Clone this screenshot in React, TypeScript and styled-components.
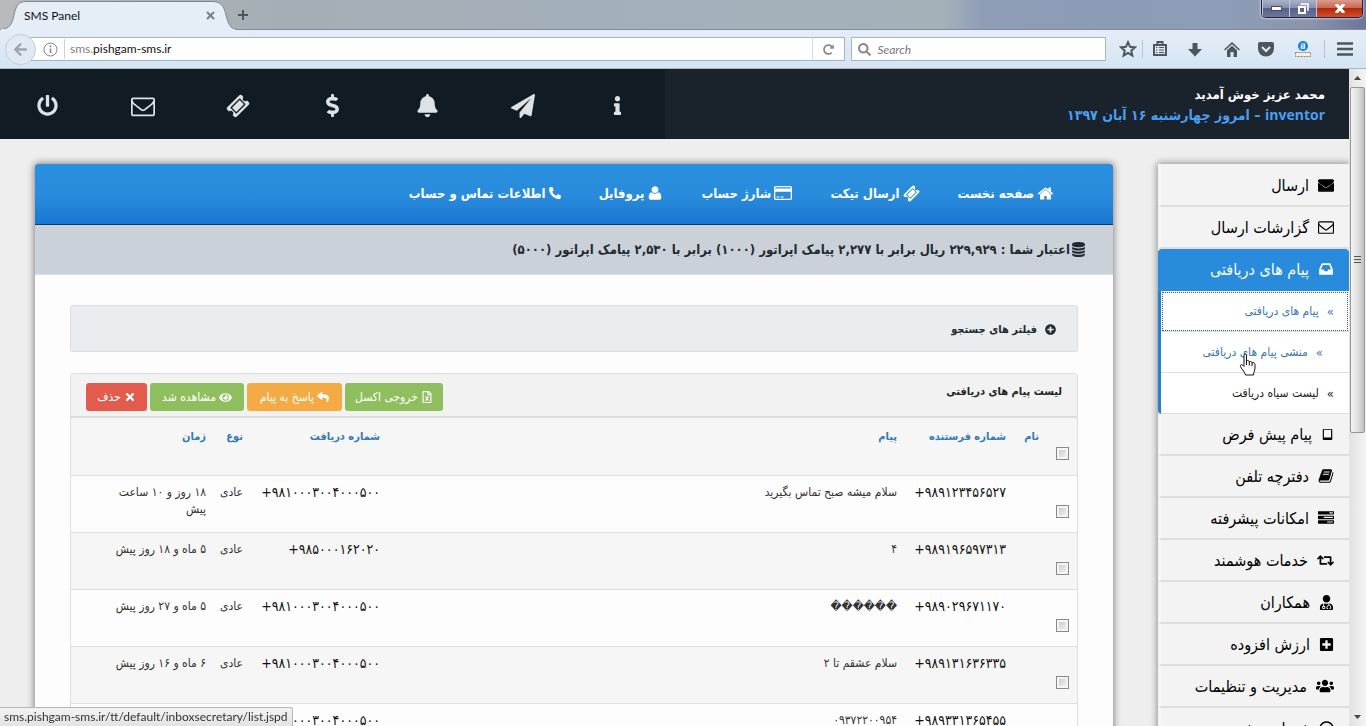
import React from 'react';
import styled, { createGlobalStyle, css } from 'styled-components';
import {
  FaArrowLeft, FaBell, FaRegCheckCircle, FaDollarSign, FaEye, FaInfo,
  FaPhoneAlt, FaPlusCircle, FaPlusSquare, FaPowerOff, FaRedoAlt, FaRegFileExcel,
  FaReply, FaRetweet, FaSearch, FaTimes, FaUserMd, FaUsers,
} from 'react-icons/fa';

const farsi = "'DejaVu Sans Condensed', 'DejaVu Sans', sans-serif";
const ui = "Lato, 'Open Sans', sans-serif";

const GlobalStyle = createGlobalStyle`
  * { box-sizing: border-box; }
  body { margin: 0; overflow: hidden; background: #eee; font-family: ${farsi}; }
  button, input { font-family: inherit; }
  a { text-decoration: none; color: inherit; }
`;

const paths = {
  envelope: 'M1664 1504v-768q-32 36-69 66-268 206-426 338-51 43-83 67t-86.5 48.5-102.5 24.5h-2q-48 0-102.5-24.5t-86.5-48.5-83-67q-158-132-426-338-37-30-69-66v768q0 13 9.5 22.5t22.5 9.5h1472q13 0 22.5-9.5t9.5-22.5zm0-1051v-24.5l-.5-13-3-12.5-5.5-9-9-7.5-14-2.5h-1472q-13 0-22.5 9.5t-9.5 22.5q0 168 147 284 193 152 401 317 6 5 35 29.5t46 37.5 44.5 31.5 50.5 27.5 43 9h2q20 0 43-9t50.5-27.5 44.5-31.5 46-37.5 35-29.5q208-165 401-317 54-43 100.5-115.5t46.5-131.5zm128-37v1088q0 66-47 113t-113 47h-1472q-66 0-113-47t-47-113v-1088q0-66 47-113t113-47h1472q66 0 113 47t47 113z',
  envelopeFull: 'M1792 620v900q0 60-47 100t-113 44h-1472q-66 0-113-44t-47-100v-900q44 49 101 87 362 246 497 345 57 42 92.500 65.500t94.500 48 110 24.500h2q51 0 110-24.500t94.500-48 92.500-65.500q170-123 498-345 57-39 100-87zm0-200q0 79-49 151t-122 123q-376 261-468 325-10 7-42.500 30.500t-54 38-52 32.500-57.500 27-50 9h-2q-23 0-50-9t-57.500-27-52-32.500-54-38-42.500-30.500q-91-64-262-182.500t-205-142.500q-62-42-117-115.500t-55-136.500q0-78 41.500-130t118.500-52h1472q65 0 112.500 40t47.500 110z',
  ticket: 'M1024 452l316 316-572 572-316-316zm-211 979l618-618q19-19 19-45t-19-45l-362-362q-18-18-45-18t-45 18l-618 618q-19 19-19 45t19 45l362 362q18 18 45 18t45-18zm889-637l-907 908q-37 37-90.5 37t-90.5-37l-126-126q56-56 56-136t-56-136-136-56-136 56l-125-126q-37-37-37-90.5t37-90.5l907-906q37-37 90.5-37t90.5 37l125 125q-56 56-56 136t56 136 136 56 136-56l126 125q37 37 37 90.5t-37 90.5z',
  plane: 'M1764 11q33 24 27 64l-256 1536q-5 29-32 45-14 8-31 8-11 0-24-5l-453-185-242 295q-18 23-49 23-13 0-22-4-19-7-30.5-23.5t-11.5-36.5v-349l864-1059-1069 925-395-162q-37-14-40-55-2-40 32-59l1664-960q15-9 32-9 20 0 36 11z',
  inbox: 'M1151 960h316q-1-3-2.5-8.5t-2.5-7.5l-212-496h-708l-212 496q-1 3-2.5 8t-2.5 8h316l95 192h320zm513 30v482q0 26-19 45t-45 19h-1408q-26 0-45-19t-19-45v-482q0-62 25-123l238-552q10-25 36.5-42t52.5-17h832q26 0 52.5 17t36.5 42l238 552q25 61 25 123z',
  user: 'M1600 1405q0 120-73 189.5t-194 69.5h-874q-121 0-194-69.5t-73-189.5q0-53 3.5-103.5t14-109 26.5-108.5 43-97.5 62-81 85.5-53.5 111.5-20q9 0 42 21.5t74.5 48 108 48 133.5 21.5 133.5-21.5 108-48 74.5-48 42-21.5q61 0 111.5 20t85.5 53.5 62 81 43 97.5 26.5 108.5 14 109 3.5 103.5zm-320-893q0 159-112.5 271.5t-271.5 112.5-271.5-112.5-112.5-271.5 112.5-271.5 271.5-112.5 271.5 112.5 112.5 271.5z',
  home: 'M1472 992v480q0 26-19 45t-45 19h-384v-384h-256v384h-384q-26 0-45-19t-19-45v-480q0-1 .5-3t.5-3l575-474 575 474q1 2 1 6zm223-69l-62 74q-8 9-21 11h-3q-13 0-21-7l-692-577-692 577q-12 8-24 7-13-2-21-11l-62-74q-8-10-7-23.5t11-21.5l719-599q32-26 76-26t76 26l244 204v-195q0-14 9-23t23-9h192q14 0 23 9t9 23v408l219 182q10 8 11 21.5t-7 23.5z',
  card: 'M160 192h1472q66 0 113 47t47 113v1088q0 66-47 113t-113 47h-1472q-66 0-113-47t-47-113v-1088q0-66 47-113t113-47zm-32 576v656q0 32 32 32h1472q32 0 32-32v-656zm0-416v96h1536v-96q0-32-32-32h-1472q-32 0-32 32zm128 896h256v96h-256zm384 0h320v96h-320z',
  book: 'M1703 478q40 57 18 129l-275 906q-19 64-76.5 107.5t-122.5 43.5h-923q-77 0-148.5-53.5t-99.5-131.5q-24-67-2-127 0-4 3-27t4-37q1-8-3-21.5t-3-19.5q2-11 8-21t16.5-23.5 16.5-23.5q23-38 45-91.5t30-91.5q3-10 .5-30t-.5-28q3-11 17-28t17-23q21-36 42-92t25-90q1-9-2.5-32t.5-28q4-13 22-30.5t22-22.5q19-26 42.5-84.5t27.5-96.5q1-8-3-25.5t-2-26.5q2-8 9-18t18-23 17-21q8-12 16.5-30.5t15-35 16-36 19.5-32 26.5-23.5 36-11.5 47.5 5.5l-1 3q38-9 51-9h761q74 0 114 56t18 130l-274 906q-36 119-71.5 153.5t-128.5 34.5h-869q-27 0-38 15-11 16-1 43 24 70 144 70h923q29 0 56-15.5t35-41.5l300-987q7-22 5-57 38 15 59 43zm-1064 2q-4 13 2 22.5t20 9.5h608q13 0 25.5-9.5t16.5-22.5l21-64q4-13-2-22.5t-20-9.5h-608q-13 0-25.5 9.5t-16.5 22.5zm-83 256q-4 13 2 22.5t20 9.5h608q13 0 25.5-9.5t16.5-22.5l21-64q4-13-2-22.5t-20-9.5h-608q-13 0-25.5 9.5t-16.5 22.5z',
  tasks: 'M1024 1408h640v-128h-640v128zm-384-512h1024v-128h-1024v128zm640-512h384v-128h-384v128zm512 832v256q0 26-19 45t-45 19h-1664q-26 0-45-19t-19-45v-256q0-26 19-45t45-19h1664q26 0 45 19t19 45zm0-512v256q0 26-19 45t-45 19h-1664q-26 0-45-19t-19-45v-256q0-26 19-45t45-19h1664q26 0 45 19t19 45zm0-512v256q0 26-19 45t-45 19h-1664q-26 0-45-19t-19-45v-256q0-26 19-45t45-19h1664q26 0 45 19t19 45z',
  database: 'M896 768q237 0 443-43t325-127v170q0 69-103 128t-280 93.5-385 34.5-385-34.5-280-93.5-103-128v-170q119 84 325 127t443 43zm0 768q237 0 443-43t325-127v170q0 69-103 128t-280 93.5-385 34.5-385-34.5-280-93.5-103-128v-170q119 84 325 127t443 43zm0-384q237 0 443-43t325-127v170q0 69-103 128t-280 93.5-385 34.5-385-34.5-280-93.5-103-128v-170q119 84 325 127t443 43zm0-1152q208 0 385 34.5t280 93.5 103 128v128q0 69-103 128t-280 93.5-385 34.5-385-34.5-280-93.5-103-128v-128q0-69 103-128t280-93.5 385-34.5z',
  tablet: 'M400 128h992q66 0 113 47t47 113v1216q0 66-47 113t-113 47h-992q-66 0-113-47t-47-113v-1216q0-66 47-113t113-47zm0 128v1056h992v-1056z',
};

function Glyph({ name, size = 16 }: { name: keyof typeof paths; size?: number }) {
  return (
    <svg width={size} height={size} viewBox="0 0 1792 1792" fill="currentColor" fillRule="evenodd" aria-hidden="true">
      <path d={paths[name]} />
    </svg>
  );
}

/* ---------- browser frame ---------- */

const Window = styled.div`
  display: flex;
  flex-direction: column;
  height: 100vh;
  overflow: hidden;
`;

const TabStrip = styled.div`
  display: flex;
  height: 30px;
  flex: none;
  position: relative;
  border-bottom: 1px solid #7f8b97;
  background: linear-gradient(90deg, #b9babb 0, #a4aeb4 20%, #a3afbb 45%, #a5b1b9 69%, #8e9cb6 72%, #8d9db7 90%, #8a94ab 96%, #6d7399 100%);
`;

const TabShape = styled.svg`
  position: absolute;
  left: 0;
  top: 0;
`;

const Tab = styled.div`
  position: relative;
  display: flex;
  align-items: center;
  justify-content: space-between;
  width: 232px;
  padding: 2px 17px 0 24px;
  font: 12px/30px ${ui};
  color: #111;
`;

const IconButton = styled.button<{ $w?: number; $color?: string }>`
  display: inline-flex;
  align-items: center;
  justify-content: center;
  flex: none;
  width: ${p => p.$w ?? 36}px;
  padding: 0;
  border: 0;
  background: none;
  color: ${p => p.$color ?? '#4c565e'};
`;

const WindowButtons = styled.div`
  display: flex;
  align-self: flex-start;
  margin-left: auto;
  margin-right: 3px;
  height: 18px;
  border: 1px solid #1d2440;
  border-top: 0;
  border-radius: 0 0 5px 5px;
  overflow: hidden;
  box-shadow: 0 0 2px 1px rgba(255, 255, 255, 0.5);
`;

const WindowButton = styled.button<{ $close?: boolean }>`
  display: flex;
  align-items: center;
  justify-content: center;
  width: ${p => (p.$close ? 46 : 27)}px;
  padding: 0;
  border: 0;
  border-left: 1px solid #c4c9d8;
  background: ${p => (p.$close
    ? 'linear-gradient(#d99b8c, #cb6850 45%, #b5270c 50%, #d0502a)'
    : 'linear-gradient(#a9b2c8, #8791ad 45%, #59608a 50%, #6d759c)')};
`;

const Toolbar = styled.div`
  display: flex;
  align-items: center;
  flex: none;
  height: 39px;
  padding: 0 1px 0 5px;
  background: linear-gradient(#e5edf7, #d5e5f3);
  border-bottom: 1px solid #a8b8c6;
  font-family: ${ui};
`;

const BackButton = styled.button`
  display: flex;
  align-items: center;
  justify-content: center;
  flex: none;
  width: 31px;
  height: 31px;
  padding: 0;
  margin-right: -6px;
  z-index: 1;
  border: 1px solid #c0cfdb;
  border-radius: 50%;
  background: #dfeaf4;
  color: #9aa5ae;
`;

const Field = styled.label<{ $search?: boolean }>`
  display: flex;
  align-items: center;
  height: 24px;
  border: 1px solid #a3b6c6;
  background: #fff;
  ${p => (p.$search
    ? css`flex: 252 1 0; gap: 6px; margin: 0 8px 0 6px; padding-left: 6px; color: #8c8c8c;`
    : css`flex: 819 1 0; padding-left: 12px; color: #8c8c8c;`)}
`;

const FieldInput = styled.input`
  flex: 1;
  min-width: 0;
  border: 0;
  padding: 0;
  outline: 0;
  background: none;
  font: italic 12px ${ui};
  color: #111;
  &::placeholder { color: #777; opacity: 1; }
`;

const Address = styled.span`
  flex: 1;
  margin-left: 6px;
  padding-left: 5px;
  border-left: 1px solid #d0d0d0;
  font: 12px/20px ${ui};
  color: #111;
  span { color: #808080; }
`;

const Reload = styled(IconButton)`
  align-self: stretch;
  border-left: 1px solid #d5dde4;
`;

const Divider = styled.i`
  flex: none;
  width: 1px;
  height: 18px;
  background: #b6c3cf;
`;

/* ---------- page ---------- */

const Viewport = styled.div`
  display: flex;
  flex: 1;
  min-height: 0;
`;

const Page = styled.div`
  flex: 1;
  min-width: 0;
  overflow: hidden;
  direction: rtl;
  background: #eee;
`;

const TopBar = styled.header`
  display: flex;
  justify-content: space-between;
  height: 70px;
  background: #1a232c;
`;

const Welcome = styled.div`
  padding: 16px 24px;
  font-size: 13px;
  font-weight: bold;
  line-height: 20px;
  color: #fff;
`;

const Today = styled.div`
  font-size: 14px;
  color: #4b9ef2;
  b { font: bold 14px/20px 'Open Sans', sans-serif; }
`;

const Shortcuts = styled.nav`
  display: flex;
  direction: ltr;
  background: #111b23;
`;

const Shortcut = styled.button`
  display: flex;
  align-items: center;
  justify-content: center;
  width: 95px;
  padding: 3px 0 0;
  border: 0;
  background: none;
  color: #dde2e6;
`;

const Body = styled.div`
  display: flex;
  align-items: flex-start;
  gap: 45px;
  padding: 25px 0 0 35px;
`;

const Side = styled.nav`
  flex: none;
  width: 191px;
  padding-top: 1px;
  box-shadow: 0 0 7px 1px rgba(0, 0, 0, 0.4);
  background: #f3f3f3;
`;

const SideItem = styled.a<{ $active?: boolean }>`
  display: flex;
  align-items: center;
  gap: 9px;
  height: 42px;
  padding-right: 15px;
  font-size: 16px;
  color: #000;
  border-bottom: 2px solid #dedede;
  border-left: 3px solid #f6f6f6;
  white-space: nowrap;
  ${p => p.$active && css`
    background: #288bdb;
    color: #fff;
    border-color: #288bdb;
    border-radius: 4px 4px 0 0;
  `}
`;

const SubMenu = styled.div`
  background: #fff;
  border-left: 3px solid #2581d0;
  border-radius: 0 0 0 4px;
`;

const SubItem = styled.a<{ $focus?: boolean; $hover?: boolean; $blue?: boolean }>`
  display: flex;
  align-items: center;
  gap: 8px;
  height: 41px;
  padding-right: ${p => (p.$hover ? 26 : 15)}px;
  font-size: 12px;
  color: ${p => (p.$blue ? '#3a78b5' : '#222')};
  border-bottom: 1px solid #dadfe3;
  white-space: nowrap;
  ${p => p.$focus && css`outline: 1px dotted #345f8f; outline-offset: -2px;`}
  span { font-size: 13px; }
`;

const Main = styled.main`
  flex: 1;
  min-width: 0;
  min-height: 700px;
  background: #fdfdfd;
  border-radius: 3px 3px 0 0;
  box-shadow: 0 0 7px 1px rgba(0, 0, 0, 0.45);
`;

const MainNav = styled.nav`
  display: flex;
  align-items: center;
  gap: 38px;
  height: 61px;
  padding: 0 59px 2px 0;
  border-bottom: 1px solid #153a60;
  border-radius: 3px 3px 0 0;
  background: linear-gradient(#2a8fde 0, #288bdb 55%, #1976d2 100%);
`;

const NavLink = styled.a`
  display: flex;
  align-items: center;
  gap: 3px;
  font-size: 13px;
  font-weight: bold;
  color: #fff;
  white-space: nowrap;
`;

const Credit = styled.div`
  display: flex;
  align-items: center;
  gap: 1px;
  height: 50px;
  padding-right: 27px;
  border-bottom: 1px solid #dde2e6;
  background: #cad1d8;
  font-size: 13px;
  font-weight: bold;
  color: #222a31;
`;

const Content = styled.div`
  display: flex;
  flex-direction: column;
  gap: 21px;
  padding: 30px 35px;
`;

const FilterButton = styled.button`
  display: flex;
  align-items: center;
  gap: 8px;
  height: 47px;
  padding: 2px 21px 0;
  border: 1px solid #d8dee3;
  border-radius: 3px;
  background: #e9edf0;
  font-size: 11px;
  font-weight: bold;
  color: #22282e;
`;

const Panel = styled.section`
  border: 1px solid #dcdfe1;
  border-radius: 3px;
  background: #fdfdfd;
`;

const PanelHead = styled.div`
  display: flex;
  justify-content: space-between;
  align-items: flex-start;
  height: 44px;
  padding: 9px 15px 0;
  border-bottom: 2px solid #dcdcdc;
  background: #f2f2f2;
`;

const PanelTitle = styled.h2`
  margin: 0;
  font-size: 11px;
  line-height: 18px;
  color: #222;
`;

const Actions = styled.div`
  display: flex;
  gap: 3px;
`;

const Action = styled.button<{ $bg: string; $w: number }>`
  display: flex;
  align-items: center;
  justify-content: center;
  gap: 3px;
  width: ${p => p.$w}px;
  height: 28px;
  padding: 0;
  border: 0;
  border-radius: 3px;
  background: ${p => p.$bg};
  color: #fff;
  font-size: 12px;
  white-space: nowrap;
`;

const Table = styled.table`
  width: 100%;
  table-layout: fixed;
  border-collapse: collapse;
  font-size: 12px;
  line-height: 17px;
  color: #333;
  tr { height: 57px; border-bottom: 1px solid #dedede; }
  tbody tr:nth-child(even), thead tr { background: #f6f6f6; }
  th, td { padding: 8px; text-align: right; vertical-align: top; white-space: nowrap; }
  th { padding-top: 10px; font-size: 11px; color: #337ab7; }
`;

const CheckCell = styled.td`
  && { padding: 29px 8px 0; }
`;

const Check = styled.input`
  appearance: none;
  display: block;
  width: 13px;
  height: 13px;
  margin: 0;
  border: 1px solid #8a8a8a;
  background: linear-gradient(135deg, #c4c4c4, #f8f8f8);
  box-shadow: inset 0 0 0 2px #f4f4f4;
`;

const Phone = styled.td`
  direction: ltr;
  font-size: 14px;
  color: #111;
`;

const Wrapping = styled.td`
  && { white-space: normal; }
`;

const ScrollBar = styled.div`
  display: flex;
  flex-direction: column;
  align-items: center;
  justify-content: space-between;
  flex: none;
  width: 17px;
  padding: 0 1px;
  background: linear-gradient(90deg, #e2e2e2, #f4f4f4);
`;

const Thumb = styled.div`
  display: flex;
  align-items: center;
  justify-content: center;
  width: 100%;
  height: 346px;
  margin-bottom: auto;
  border: 1px solid #979797;
  border-radius: 2px;
  background: linear-gradient(90deg, #f4f4f4, #dedede 55%, #bfbfbf);
`;

const Arrow = styled.div`
  height: 18px;
  display: flex;
  align-items: center;
`;

const Status = styled.div`
  position: fixed;
  left: 0;
  bottom: 0;
  height: 19px;
  padding: 0 4px;
  border: 1px solid #b5b5b5;
  border-width: 1px 1px 0 0;
  border-radius: 0 3px 0 0;
  background: linear-gradient(#f3f3f3, #e3e3e3);
  font: 12px/18px ${ui};
  color: #333;
`;

const Pointer = styled.svg`
  position: absolute;
  right: 92px;
  top: 21px;
`;

const HoverHost = styled.div`
  position: relative;
`;

const sideTop = [
  { text: 'ارسال', icon: <Glyph name="envelopeFull" /> },
  { text: 'گزارشات ارسال', icon: <Glyph name="envelope" /> },
];

const sideBottom = [
  { text: 'پیام پیش فرض', icon: <Glyph name="tablet" size={13} /> },
  { text: 'دفترچه تلفن', icon: <Glyph name="book" /> },
  { text: 'امکانات پیشرفته', icon: <Glyph name="tasks" /> },
  { text: 'خدمات هوشمند', icon: <FaRetweet size={17} /> },
  { text: 'همکاران', icon: <FaUserMd size={15} /> },
  { text: 'ارزش افزوده', icon: <FaPlusSquare size={15} /> },
  { text: 'مدیریت و تنظیمات', icon: <FaUsers size={18} /> },
  { text: 'خدمات ویژه', icon: <FaRegCheckCircle size={15} /> },
];

const rows = [
  ['+۹۸۹۱۲۳۴۵۶۵۲۷', 'سلام میشه صبح تماس بگیرید', '+۹۸۱۰۰۰۳۰۰۴۰۰۰۵۰۰', '۱۸ روز و ۱۰ ساعت پیش'],
  ['+۹۸۹۱۹۶۵۹۷۳۱۳', '۴', '+۹۸۵۰۰۰۱۶۲۰۲۰', '۵ ماه و ۱۸ روز پیش'],
  ['+۹۸۹۰۲۹۶۷۱۱۷۰', '������', '+۹۸۱۰۰۰۳۰۰۴۰۰۰۵۰۰', '۵ ماه و ۲۷ روز پیش'],
  ['+۹۸۹۱۳۱۶۳۶۳۳۵', 'سلام عشقم تا ۲', '+۹۸۱۰۰۰۳۰۰۴۰۰۰۵۰۰', '۶ ماه و ۱۶ روز پیش'],
  ['+۹۸۹۳۳۱۳۶۵۴۵۵', '۰۹۳۷۲۲۰۰۹۵۴', '+۹۸۱۰۰۰۳۰۰۴۰۰۰۵۰۰', ''],
];

const navLinks = [
  { text: 'صفحه نخست', icon: <Glyph name="home" size={17} /> },
  { text: 'ارسال تیکت', icon: <Glyph name="ticket" size={17} /> },
  { text: 'شارژ حساب', icon: <Glyph name="card" size={18} /> },
  { text: 'پروفایل', icon: <Glyph name="user" size={16} /> },
  { text: 'اطلاعات تماس و حساب', icon: <FaPhoneAlt size={12} /> },
];

export default function App() {
  return (
    <Window>
      <GlobalStyle />
      <TabStrip>
        <TabShape width="236" height="30" viewBox="0 0 236 30" aria-hidden="true">
          <path d="M0 29.500C10 29 12 24 14 15C16 6 18 1.500 26 1.500H212C221 1.500 224 6 226 15C228 24 231 29 236 29.500" fill="#e5edf7" stroke="#7d8894" />
          <path d="M1 29.500H235" stroke="#e5edf7" strokeWidth="1" />
        </TabShape>
        <Tab>
          SMS Panel
          <IconButton $w={10} $color="#7b858e" aria-label="Close tab">
            <svg width="9" height="9" viewBox="0 0 9 9"><path d="M1 1L8 8M8 1L1 8" stroke="currentColor" strokeWidth="2.200" /></svg>
          </IconButton>
        </Tab>
        <IconButton $w={22} aria-label="New tab">
          <svg width="10" height="10" viewBox="0 0 10 10"><path d="M5 0V10M0 5H10" stroke="currentColor" strokeWidth="2" /></svg>
        </IconButton>
        <WindowButtons>
          <WindowButton aria-label="Minimize">
            <svg width="11" height="5"><rect x="0.500" y="0.500" width="10" height="4" fill="#fff" stroke="#444a66" strokeWidth="1" /></svg>
          </WindowButton>
          <WindowButton aria-label="Restore">
            <svg width="11" height="11" viewBox="0 0 11 11" fill="none" stroke="#fff" strokeWidth="2"><path d="M3.500 2V1H10V7H9" strokeWidth="1.500" /><rect x="1" y="4" width="6" height="6" /></svg>
          </WindowButton>
          <WindowButton $close aria-label="Close">
            <svg width="10" height="9" viewBox="0 0 10 9"><path d="M1 0L9 9M9 0L1 9" stroke="#fff" strokeWidth="3" /></svg>
          </WindowButton>
        </WindowButtons>
      </TabStrip>
      <Toolbar>
        <BackButton aria-label="Back"><FaArrowLeft size={15} /></BackButton>
        <Field as="div">
          <svg width="15" height="15" viewBox="0 0 15 15" fill="none" stroke="#858585"><circle cx="7.500" cy="7.500" r="6.500" /><path d="M7.500 6.500V11M7.500 3.500V5.200" strokeWidth="1.600" /></svg>
          <Address><span>sms.</span>pishgam-sms.ir</Address>
          <Reload $w={32} $color="#8a8a8a" aria-label="Reload"><FaRedoAlt size={11} /></Reload>
        </Field>
        <Field $search>
          <FaSearch size={13} />
          <FieldInput placeholder="Search" aria-label="Search" />
        </Field>
        <IconButton $w={28} aria-label="Bookmark">
          <svg width="18" height="18" viewBox="0 0 18 18" fill="none" stroke="currentColor" strokeWidth="2"><path d="M9 2.200L11.100 6.800L16 7.300L12.300 10.700L13.400 15.600L9 13L4.600 15.600L5.700 10.700L2 7.300L6.900 6.800Z" /></svg>
        </IconButton>
        <Divider />
        <IconButton $w={34} aria-label="Library">
          <svg width="14" height="16" viewBox="0 0 14 16" fill="none" stroke="currentColor" strokeWidth="2"><path d="M4.500 3V1H9.500V3M1 4H13V14H1Z" /><path d="M3 6.500H4.500M3 9H4.500M3 11.500H4.500M6 6.500H11M6 9H11M6 11.500H11" strokeWidth="1.200" /></svg>
        </IconButton>
        <IconButton $w={36} aria-label="Downloads">
          <svg width="14" height="15" viewBox="0 0 14 15" fill="currentColor"><path d="M4.500 1H9.500V7H14L7 14.500L0 7H4.500Z" /></svg>
        </IconButton>
        <IconButton $w={38} aria-label="Home">
          <svg width="16" height="15" viewBox="0 0 16 15" fill="currentColor"><path d="M8 0L16 7.500L15 8.500L8 2.200L1 8.500L0 7.500Z" /><path d="M8 3.800L13 8.300V15H9.500V10H6.500V15H3V8.300Z" /></svg>
        </IconButton>
        <IconButton $w={30} aria-label="Pocket">
          <svg width="16" height="15" viewBox="0 0 16 15"><path d="M2 0H14Q16 0 16 2V6.500A8 8 0 0 1 0 6.500V2Q0 0 2 0Z" fill="currentColor" /><path d="M4 5L8 9L12 5" fill="none" stroke="#e3ecf5" strokeWidth="2" /></svg>
        </IconButton>
        <IconButton $w={43} aria-label="Add-on">
          <svg width="16" height="17" viewBox="0 0 16 17"><circle cx="8" cy="5" r="5" fill="#1d7fe0" /><path d="M6 3H9.500V7.200H6.300V5H9.500" fill="none" stroke="#fff" strokeWidth="1.200" /><rect x="0.500" y="11.500" width="15" height="4" fill="#f5efe2" stroke="#8c8778" strokeDasharray="2 1" /></svg>
        </IconButton>
        <Divider />
        <IconButton $w={40} aria-label="Menu">
          <svg width="16" height="14" viewBox="0 0 16 14"><path d="M0 1.500H16M0 7H16M0 12.500H16" stroke="currentColor" strokeWidth="2.600" /></svg>
        </IconButton>
      </Toolbar>
      <Viewport>
        <Page lang="fa">
          <TopBar>
            <Welcome>
              محمد عزیز خوش آمدید
              <Today><b>inventor</b> – امروز چهارشنبه ۱۶ آبان ۱۳۹۷</Today>
            </Welcome>
            <Shortcuts>
              <Shortcut aria-label="خروج"><FaPowerOff size={21} /></Shortcut>
              <Shortcut aria-label="پیام"><Glyph name="envelope" size={24} /></Shortcut>
              <Shortcut aria-label="تیکت"><Glyph name="ticket" size={24} /></Shortcut>
              <Shortcut aria-label="شارژ"><FaDollarSign size={23} /></Shortcut>
              <Shortcut aria-label="اعلان"><FaBell size={23} /></Shortcut>
              <Shortcut aria-label="ارسال"><Glyph name="plane" size={24} /></Shortcut>
              <Shortcut aria-label="راهنما"><FaInfo size={19} /></Shortcut>
            </Shortcuts>
          </TopBar>
          <Body>
            <Side>
              {sideTop.map(i => <SideItem href="#" key={i.text}>{i.icon}{i.text}</SideItem>)}
              <SideItem href="#" $active><Glyph name="inbox" />پیام های دریافتی</SideItem>
              <SubMenu>
                <SubItem href="#" $blue $focus><span>»</span>پیام های دریافتی</SubItem>
                <HoverHost>
                  <SubItem href="#" $blue $hover><span>»</span>منشی پیام های دریافتی</SubItem>
                  <Pointer width="18" height="23" viewBox="0 0 18 23" aria-hidden="true">
                    <path d="M5 1.500C6 .5 7.500 1 7.500 2.500V8C8.500 7 10 7.500 10.300 8.800C11.500 8 12.800 8.500 13 9.800C14.500 9.200 16 10 16 11.500V15C16 18 14.500 19 14.500 22H6.500C6 19 3 17 1.500 13.500C.8 12 2.500 10.800 4 12.500L5 13.500Z" fill="#fff" stroke="#111" />
                    <path d="M7.500 8V12M10.300 9V12.500M13 10V13" stroke="#111" fill="none" />
                  </Pointer>
                </HoverHost>
                <SubItem href="#"><span>»</span>لیست سیاه دریافت</SubItem>
              </SubMenu>
              {sideBottom.map(i => <SideItem href="#" key={i.text}>{i.icon}{i.text}</SideItem>)}
            </Side>
            <Main>
              <MainNav>
                {navLinks.map(l => <NavLink href="#" key={l.text}>{l.icon}{l.text}</NavLink>)}
              </MainNav>
              <Credit>
                <Glyph name="database" size={15} />
                <span>اعتبار شما : ۲۲۹,۹۲۹ ریال برابر با ۲,۲۷۷ پیامک اپراتور (۱۰۰۰) برابر با ۲,۵۳۰ پیامک اپراتور (۵۰۰۰)</span>
              </Credit>
              <Content>
                <FilterButton><FaPlusCircle size={11} />فیلتر های جستجو</FilterButton>
                <Panel>
                  <PanelHead>
                    <PanelTitle>لیست پیام های دریافتی</PanelTitle>
                    <Actions>
                      <Action $bg="#8fbe5f" $w={98}><FaRegFileExcel size={12} />خروجی اکسل</Action>
                      <Action $bg="#f5ab43" $w={95}><FaReply size={12} />پاسخ به پیام</Action>
                      <Action $bg="#8fbe5f" $w={94}><FaEye size={13} />مشاهده شد</Action>
                      <Action $bg="#e35b4c" $w={61}><FaTimes size={12} />حذف</Action>
                    </Actions>
                  </PanelHead>
                  <Table>
                    <colgroup>
                      <col width="30" /><col width="33" /><col width="109" /><col /><col width="137" /><col width="37" /><col width="108" /><col width="35" />
                    </colgroup>
                    <thead>
                      <tr>
                        <CheckCell as="th"><Check type="checkbox" aria-label="انتخاب همه" /></CheckCell>
                        <th>نام</th>
                        <th>شماره فرستنده</th>
                        <th>پیام</th>
                        <th>شماره دریافت</th>
                        <th>نوع</th>
                        <th>زمان</th>
                        <th />
                      </tr>
                    </thead>
                    <tbody>
                      {rows.map(([sender, message, receiver, time]) => (
                        <tr key={sender}>
                          <CheckCell><Check type="checkbox" aria-label={sender} /></CheckCell>
                          <td />
                          <Phone>{sender}</Phone>
                          <td>{message}</td>
                          <Phone>{receiver}</Phone>
                          <td>{time && 'عادی'}</td>
                          <Wrapping>{time}</Wrapping>
                          <td />
                        </tr>
                      ))}
                    </tbody>
                  </Table>
                </Panel>
              </Content>
            </Main>
          </Body>
        </Page>
        <ScrollBar>
          <Arrow><svg width="7" height="4" viewBox="0 0 7 4"><path d="M0 4L3.500 0L7 4Z" fill="#444" /></svg></Arrow>
          <Thumb><svg width="7" height="8" viewBox="0 0 7 8"><path d="M0 .5H7M0 3.500H7M0 6.500H7" stroke="#555" /></svg></Thumb>
          <Arrow><svg width="7" height="4" viewBox="0 0 7 4"><path d="M0 0L3.500 4L7 0Z" fill="#444" /></svg></Arrow>
        </ScrollBar>
      </Viewport>
      <Status>sms.pishgam-sms.ir/tt/default/inboxsecretary/list.jspd</Status>
    </Window>
  );
}
